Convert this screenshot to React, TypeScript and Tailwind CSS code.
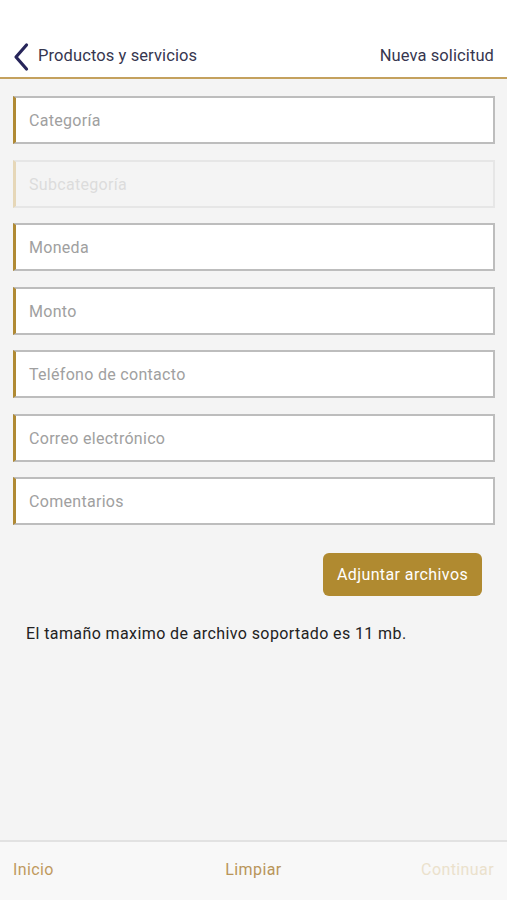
import React from "react";

const fields = [
  { label: "Categoría", disabled: false },
  { label: "Subcategoría", disabled: true },
  { label: "Moneda", disabled: false },
  { label: "Monto", disabled: false },
  { label: "Teléfono de contacto", disabled: false },
  { label: "Correo electrónico", disabled: false },
  { label: "Comentarios", disabled: false },
];

export default function App() {
  return (
    <div
      className="w-[507px] h-[900px] bg-[#f4f4f4] flex flex-col"
      style={{ fontFamily: "Roboto, 'Liberation Sans', sans-serif" }}
    >
      <div className="h-[77px] bg-white flex items-center pt-[36px] px-[12px] justify-between">
        <div className="flex items-center gap-[8px]">
          <svg width="18" height="30" viewBox="0 0 18 30">
            <path d="M14.5 3 L4 15 L14.5 27" fill="none" stroke="#27255a" strokeWidth="3.2" strokeLinecap="round" strokeLinejoin="round" />
          </svg>
          <span className="text-[16.5px] text-[#36364f] tracking-[0.1px]">Productos y servicios</span>
        </div>
        <span className="text-[16.5px] text-[#36364f] tracking-[0.1px] mr-[1px]">Nueva solicitud</span>
      </div>
      <div className="h-[2px] bg-[#c4a15e]" />
      <div className="flex flex-col gap-[15.5px] pt-[17px] px-[13px] pr-[12px]">
        {fields.map((f) => (
          <div
            key={f.label}
            className={
              f.disabled
                ? "h-[48px] flex items-center bg-[#f4f4f4] border-2 border-[#e6e6e6] border-l-[3px] border-l-[#e6d7b8] pl-[13px] pt-[2px]"
                : "h-[48px] flex items-center bg-white border-2 border-[#bdbdbd] border-l-[3px] border-l-[#b08a34] pl-[13px] pt-[2px]"
            }
          >
            <span
              className={
                f.disabled
                  ? "text-[16px] tracking-[0.3px] text-[#dcdcdc]"
                  : "text-[16px] tracking-[0.3px] text-[#a0a0a0]"
              }
            >
              {f.label}
            </span>
          </div>
        ))}
      </div>
      <div className="flex justify-end pr-[25px] mt-[28px]">
        <button className="w-[159px] h-[43px] rounded-[6px] bg-[#b08a30] text-white text-[16px] tracking-[0.4px] pt-[1px]">
          Adjuntar archivos
        </button>
      </div>
      <p className="mt-[26px] pl-[26px] text-[16px] tracking-[0.4px] text-[#222222]">
        El tamaño maximo de archivo soportado es 11 mb.
      </p>
      <div className="flex-1" />
      <div className="h-[60px] border-t-2 border-[#e2e2e2] bg-[#f8f8f8] grid grid-cols-3 items-center px-[13px] pb-[2px]">
        <span className="text-[16px] tracking-[0.4px] text-[#c09a5e]">Inicio</span>
        <span className="text-[16px] tracking-[0.4px] text-[#b8955a] text-center">Limpiar</span>
        <span className="text-[16px] tracking-[0.4px] text-[#ebe1cc] text-right">Continuar</span>
      </div>
    </div>
  );
}
